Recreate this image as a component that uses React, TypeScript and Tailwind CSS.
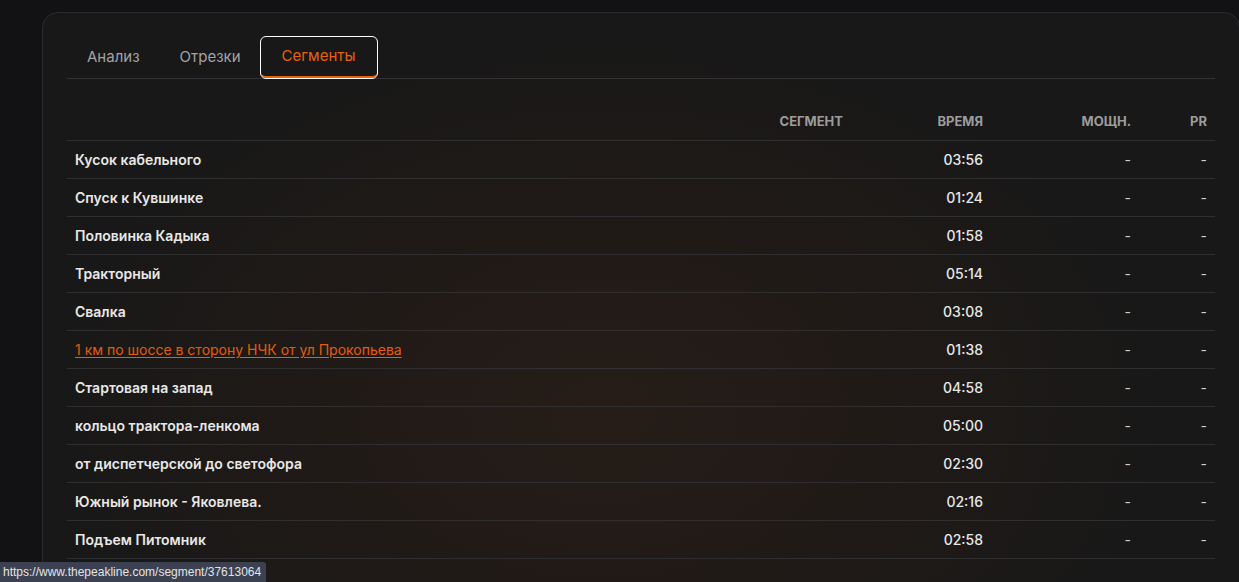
const TABS = ['Анализ', 'Отрезки', 'Сегменты']

const SEGMENTS = [
  { name: 'Кусок кабельного', time: '03:56' },
  { name: 'Спуск к Кувшинке', time: '01:24' },
  { name: 'Половинка Кадыка', time: '01:58' },
  { name: 'Тракторный', time: '05:14' },
  { name: 'Свалка', time: '03:08' },
  { name: '1 км по шоссе в сторону НЧК от ул Прокопьева', time: '01:38', hovered: true },
  { name: 'Стартовая на запад', time: '04:58' },
  { name: 'кольцо трактора-ленкома', time: '05:00' },
  { name: 'от диспетчерской до светофора', time: '02:30' },
  { name: 'Южный рынок - Яковлева.', time: '02:16' },
  { name: 'Подъем Питомник', time: '02:58' },
]

const COLS = 'grid grid-cols-[1fr_140px_148px_76px]'

function App() {
  return (
    <div className="relative h-[582px] overflow-hidden bg-[#121214] pt-3 font-['Inter',sans-serif]">
      <section className="ml-[42px] h-[640px] w-[1198px] rounded-2xl border border-[#2b2b2d] bg-[radial-gradient(ellipse_560px_380px_at_560px_400px,#261d18_0%,#201a17_50%,#181818_100%)] px-6 pt-6">
        <div className="flex border-b border-[#333335]">
          {TABS.map((tab) => {
            const active = tab === 'Сегменты'
            return (
              <button
                key={tab}
                type="button"
                className={
                  active
                    ? 'h-[41px] rounded-[5px] border-b-2 border-[#e8620c] px-[21px] text-[15px] text-[#e8620c] outline outline-1 outline-white'
                    : 'h-[41px] px-5 text-[15px] text-[#a3a3a3]'
                }
              >
                {tab}
              </button>
            )
          })}
        </div>

        <div className="mt-6">
          <div className={`${COLS} h-[38px] items-center border-b border-[#2f2f31] text-[13px] font-bold uppercase text-[#9c9c9c]`}>
            <span className="px-2 text-right">Сегмент</span>
            <span className="px-2 text-right">Время</span>
            <span className="px-2 text-right">Мощн.</span>
            <span className="px-2 text-right">PR</span>
          </div>
          {SEGMENTS.map((seg) => (
            <div
              key={seg.name}
              className={`${COLS} h-[38px] items-center border-b border-[#2f2f31] text-[14px] font-semibold text-[#e8e8e8]`}
            >
              <span className="px-2">
                {seg.hovered ? (
                  <a href="#" className="font-normal text-[#e35d0b] underline underline-offset-2">
                    {seg.name}
                  </a>
                ) : (
                  seg.name
                )}
              </span>
              <span className="px-2 text-right font-medium">{seg.time}</span>
              <span className="px-2 text-right font-normal text-[#cfcfcf]">-</span>
              <span className="px-2 text-right font-normal text-[#cfcfcf]">-</span>
            </div>
          ))}
        </div>
      </section>

      <div className="absolute bottom-0 left-0 flex h-5 items-center rounded-tr-[3px] bg-[#3b4151] pl-[3px] pr-[5px] font-['Liberation_Sans',sans-serif] text-[12px] text-[#e4e4e4]">
        https://www.thepeakline.com/segment/37613064
      </div>
    </div>
  )
}

export default App
